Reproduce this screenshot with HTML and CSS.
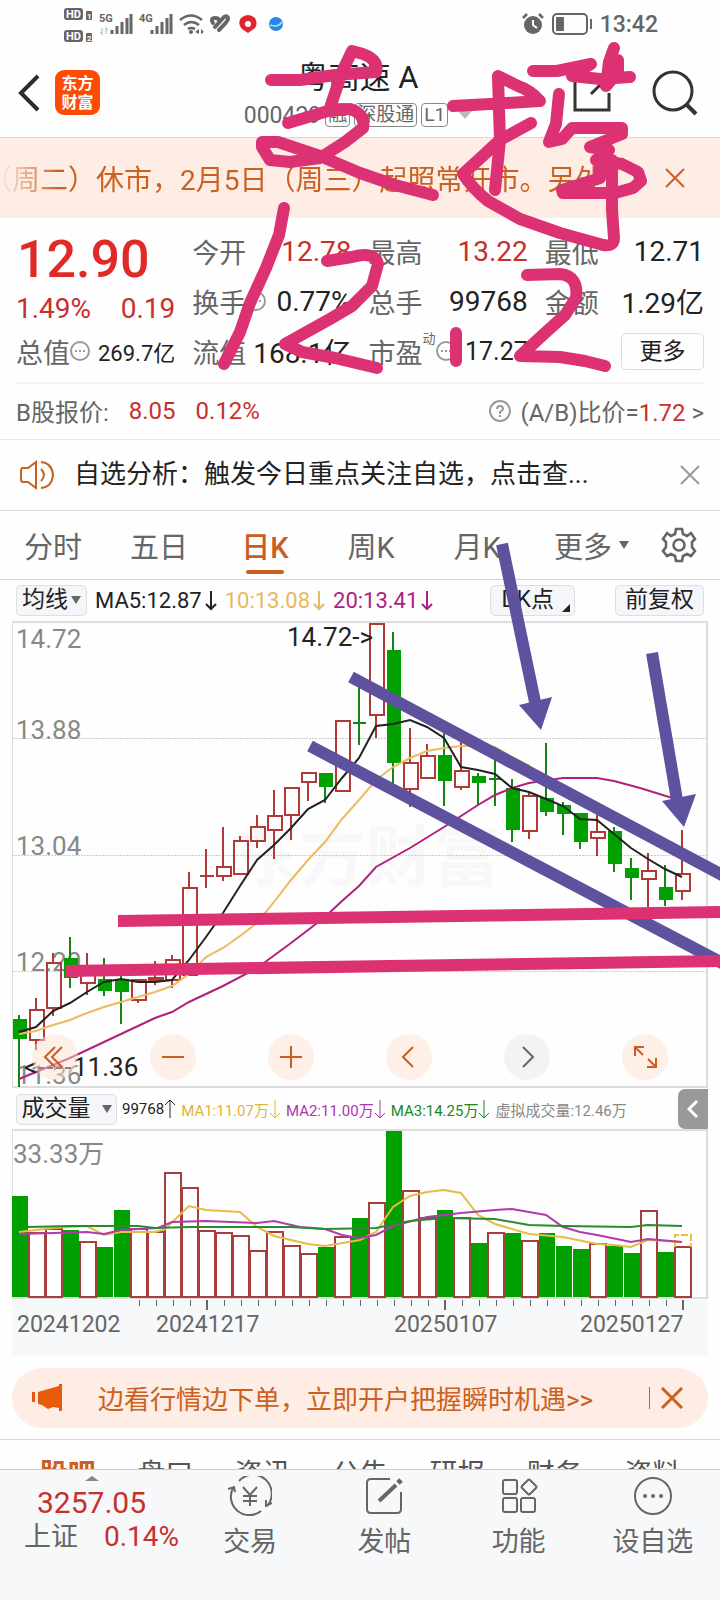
FILE: index.html
```html
<!DOCTYPE html>
<html lang="zh-CN">
<head>
<meta charset="utf-8">
<meta name="viewport" content="width=device-width, initial-scale=1">
<title>粤高速 A</title>
<link rel="stylesheet" href="styles.css">
</head>
<body>
<div class="status">
  <svg class="status-icons" viewBox="60 0 230 48" role="img" aria-label="信号状态">
    <g fill="#666"><rect x="64" y="8" width="19" height="12" rx="3"/><rect x="64" y="30" width="19" height="12" rx="3"/><rect x="86" y="11" width="6" height="9" rx="1"/><rect x="86" y="33" width="6" height="9" rx="1"/></g>
    <g class="tiny" fill="#fff"><text x="66" y="18">HD</text><text x="66" y="40">HD</text></g>
    <g class="micro" fill="#fff"><text x="87" y="19">1</text><text x="87" y="41">2</text></g>
    <g class="tiny" fill="#666"><text x="99" y="22">5G</text><text x="139" y="22">4G</text></g>
    <path d="M112 30v4M117 26v8M122 22v12M127 18v16M131 14v20M152 30v4M157 26v8M162 22v12M167 18v16M171 14v20" stroke="#666" stroke-width="3"/>
    <path d="M102 28v6l-2-2M106 34v-6l2 2" stroke="#ccc" stroke-width="1.5" fill="none"/>
    <g fill="none" stroke="#666" stroke-width="2.6"><path d="M180 20q11-9 22 0M184 25q7-6 15 0M188 29q3-2 7 0"/></g>
    <circle cx="191" cy="32" r="2" fill="#666"/><path d="M199 29l-4 3 4 2zM201 29v5l3-2z" fill="#666"/>
    <path d="M213 23q-3-5 2-5 4 0 4 3M215 27l9-10q4-2 4 2 0 2-9 11" fill="none" stroke="#666" stroke-width="4" stroke-linecap="round"/>
    <path d="M241 18q7-6 14 0 3 6 0 10l-7 5-6-4q-5-6-1-11z" fill="#dc2530"/><circle cx="248" cy="24" r="3" fill="#fff"/>
    <circle cx="276" cy="24" r="7" fill="#2789e5"/><path d="M270 25q8 3 12-3" stroke="#b5dcff" stroke-width="1.5" fill="none"/>
  </svg>
  <div class="status-right">
    <svg width="22" height="22" viewBox="0 0 22 22"><circle cx="11" cy="12" r="9" fill="#666"/><path d="M1 5l4-4M17 1l4 4" stroke="#666" stroke-width="2.5"/><path d="M11 7v5l4 3" stroke="#fff" stroke-width="2" fill="none"/></svg>
    <svg width="42" height="22" viewBox="0 0 42 22"><rect x="2" y="1" width="34" height="20" rx="4" fill="none" stroke="#666" stroke-width="2"/><rect x="5" y="4" width="8" height="14" rx="1" fill="#666"/><path d="M40 6v10" stroke="#666" stroke-width="2"/></svg>
    <time>13:42</time>
  </div>
</div>

<header class="header">
  <div class="header-left">
    <button class="icon-btn" aria-label="返回"><svg width="24" height="38" viewBox="0 0 24 38"><path d="M20 2L3 19l17 17" fill="none" stroke="#2c2c2c" stroke-width="4"/></svg></button>
    <div class="logo"><span>东方</span><span>财富</span></div>
  </div>
  <div class="header-title">
    <h1>粤高速 A</h1>
    <div class="sub"><span>000429</span><i>融</i><i>深股通</i><i>L1</i><b class="caret"></b></div>
  </div>
  <div class="header-right">
    <button class="icon-btn" aria-label="分享"><svg width="40" height="44" viewBox="0 0 40 44"><path d="M20 5H3v34h34V22M19 23L36 6M26 4h11v11" fill="none" stroke="#333" stroke-width="3"/></svg></button>
    <button class="icon-btn" aria-label="搜索"><svg width="46" height="46" viewBox="0 0 46 46"><circle cx="21" cy="21" r="19" fill="none" stroke="#333" stroke-width="3"/><path d="M34 34l10 10" stroke="#333" stroke-width="4"/></svg></button>
  </div>
</header>

<div class="ticker">
  <p>（周二）休市，2月5日（周三）起照常开市。另外</p>
  <button class="icon-btn" aria-label="关闭公告"><svg width="22" height="22" viewBox="0 0 22 22"><path d="M2 2l18 18M20 2L2 20" stroke="#cc6020" stroke-width="2"/></svg></button>
</div>

<section class="quote">
  <div class="quote-main">
    <div class="price up">12.90</div>
    <div class="change up"><span>1.49%</span><span>0.19</span></div>
    <div class="pair"><span class="k">总值<svg class="dots" viewBox="0 0 20 20"><circle cx="10" cy="10" r="9"/><path d="M5 10h2M9 10h2M13 10h2"/></svg></span><span class="small">269.7亿</span></div>
  </div>
  <div class="quote-col">
    <div class="pair"><span class="k">今开</span><span class="up">12.78</span></div>
    <div class="pair"><span class="k">换手<svg class="dots" viewBox="0 0 20 20"><circle cx="10" cy="10" r="9"/><path d="M5 10h2M9 10h2M13 10h2"/></svg></span><span>0.77%</span></div>
    <div class="pair"><span class="k">流值</span><span>168.1亿</span></div>
  </div>
  <div class="quote-col">
    <div class="pair"><span class="k">最高</span><span class="up">13.22</span></div>
    <div class="pair"><span class="k">总手</span><span>99768</span></div>
    <div class="pair"><span class="k">市盈<sup>动</sup><svg class="dots" viewBox="0 0 20 20"><circle cx="10" cy="10" r="9"/><path d="M5 10h2M9 10h2M13 10h2"/></svg></span><span class="mid">17.27</span></div>
  </div>
  <div class="quote-col">
    <div class="pair"><span class="k">最低</span><span>12.71</span></div>
    <div class="pair"><span class="k">金额</span><span>1.29亿</span></div>
    <div class="pair end"><button class="more">更多</button></div>
  </div>
</section>

<section class="bshare">
  <span>B股报价:</span><span class="up">8.05</span><span class="up">0.12%</span>
  <a href="#ratio" class="ratio"><svg width="22" height="22" viewBox="0 0 22 22"><circle cx="11" cy="11" r="10" fill="none" stroke="#999" stroke-width="2"/><path d="M8 9q0-3 3-3t3 3q0 1-3 3v2M11 15v2" fill="none" stroke="#999" stroke-width="2"/></svg><span>(A/B)比价=<em class="up">1.72</em> &gt;</span></a>
</section>

<section class="notice">
  <svg width="34" height="30" viewBox="0 0 34 30" fill="none" stroke="#c9601f" stroke-width="2"><path d="M16 2v26l-8-6H3q-2 0-2-3v-8q0-3 2-3h5zM21 9q6 6 0 12M21 2q11 1 12 13-1 12-12 13"/></svg>
  <p>自选分析：触发今日重点关注自选，点击查...</p>
  <button class="icon-btn" aria-label="关闭提示"><svg width="20" height="20" viewBox="0 0 20 20"><path d="M1 1l18 18M19 1L1 19" stroke="#999" stroke-width="2"/></svg></button>
</section>

<nav class="tabs">
  <button>分时</button><button>五日</button><button class="active">日K</button><button>周K</button><button>月K</button>
  <button class="tab-more">更多<b class="tri"></b></button>
  <button class="gear" aria-label="设置"><svg width="36" height="36" viewBox="0 0 36 36" fill="none" stroke="#666" stroke-width="2.6"><path d="M15 2h6l1 5 4 2 4-3 4 6-3 3v5l3 4-4 5-4-2-4 2-1 5h-6l-1-5-4-2-4 2-4-5 3-4v-5l-3-3 4-6 4 3 4-2z"/><circle cx="18" cy="18" r="5.5"/></svg></button>
</nav>

<div class="ma-bar">
  <button class="chip">均线<b class="tri"></b></button>
  <span class="c-black">MA5:12.87<svg class="arr" viewBox="0 0 12 22"><path d="M6 2v18M1 15l5 5 5-5"/></svg></span>
  <span class="c-yellow">10:13.08<svg class="arr" viewBox="0 0 12 22"><path d="M6 2v18M1 15l5 5 5-5"/></svg></span>
  <span class="c-mag">20:13.41<svg class="arr" viewBox="0 0 12 22"><path d="M6 2v18M1 15l5 5 5-5"/></svg></span>
  <div class="chips-right"><button class="chip dk">DK点<b class="corner"></b></button><button class="chip">前复权</button></div>
</div>

<div class="kchart">
  <svg class="chart" viewBox="0 620 720 469" role="img" aria-label="日K线图">
    <text class="watermark" x="232" y="881">东方财富</text>
    <path d="M12.5 622V1087" stroke="#ddd"/><path d="M12 622H707V1087H12" fill="none" stroke="#ddd" stroke-width="2"/>
    <path d="M12 738.500H707M12 855.500H707M12 971.500H707" stroke="#ccc" stroke-dasharray="2 1"/>
    <g class="axis"><text x="16" y="648">14.72</text><text x="16" y="739">13.88</text><text x="16" y="855">13.04</text><text x="16" y="971">12.20</text><text x="16" y="1084">11.36</text></g>
    <path stroke="#148414" stroke-width="2" d="M19 1015V1087M70 937V988M104 958V996M121 975V1024M325 773V803M359 687V745M353 723H366M393 632V790M444 733V806M478 773V805M495 760V806M489 779H501M512 779V842M546 743V816M563 802V835M580 813V849M614 827V872M631 858V900M665 865V906"/>
    <path fill="#00a000" d="M13 1019h14v20h-14zM64 958h14v20h-14zM98 979h14v12h-14zM115 979h14v13h-14zM319 773h14v14h-14zM387 650h14v113h-14zM438 755h14v26h-14zM472 776h14v7h-14zM506 788h14v42h-14zM540 798h14v14h-14zM557 805h14v9h-14zM574 813h14v29h-14zM608 831h14v33h-14zM625 868h14v10h-14zM659 887h14v13h-14z"/>
    <path stroke="#b03a38" stroke-width="2" d="M36 998V1010M36 1040V1050M53 953V963M53 1008V1016M87 953V975M87 983V995M138 1000V1003M155 961V985M149 979.500H163M172 955V960M172 980V988M189 872V888M206 849V888M200 876H214M223 827V867M223 876V881M240 836V841M257 815V827M257 841V848M274 790V816M274 830V859M291 815V840M308 782V801M376 715V738M410 728V763M410 789V807M427 744V756M461 742V771M461 787V790M529 792V796M529 831V839M597 815V832M597 838V856M648 853V871M648 879V907M682 830V873M682 891V900"/>
    <path fill="none" stroke="#b03a38" stroke-width="2" d="M30 1010h14v30h-14zM47 963h14v45h-14zM81 975h14v8h-14zM132 980h14v20h-14zM149 978h14v3h-14zM166 960h14v20h-14zM183 888h14v87h-14zM217 867h14v9h-14zM234 841h14v33h-14zM251 827h14v14h-14zM268 816h14v14h-14zM285 788h14v27h-14zM302 773h14v9h-14zM336 721h14v70h-14zM370 624h14v91h-14zM404 763h14v26h-14zM421 756h14v22h-14zM455 771h14v16h-14zM523 796h14v35h-14zM591 832h14v6h-14zM642 871h14v8h-14zM676 874h14v17h-14z"/>
    <g fill="none" stroke-width="2">
      <polyline stroke="#b0207f" points="19,1079 70,1058 121,1034 155,1018 172,1012 189,1002 223,986 257,968 291,943 325,917 342,901 359,886 376,867 410,848 444,827 478,805 495,795 512,788 529,783 563,778 597,778 614,781 640,788 682,801"/>
      <polyline stroke="#edba5e" points="19,1034 36,1031 53,1025 70,1020 87,1013 104,1007 121,1002 138,997 155,992 172,986 189,974 206,957 223,948 240,936 257,923 274,902 291,880 308,860 325,842 342,819 359,800 376,780 393,767 410,758 427,751 444,748 461,746 478,746 495,747 512,757 530,766"/>
      <polyline stroke="#222" points="19,1032 36,1027 53,1011 70,1003 87,992 104,982 121,979 138,982 155,982 172,980 189,960 206,937 223,913 240,886 257,860 274,845 291,828 308,809 325,800 342,778 359,758 376,726 393,724 410,720 427,727 444,738 461,767 478,770 495,774 512,788 529,792 546,799 563,806 580,819 597,820 614,834 631,848 648,859 665,869 682,877"/>
    </g>
    <g class="mark"><text x="287" y="646">14.72-&gt;</text><text x="24" y="1076">&lt;</text><text x="73" y="1076">11.36</text></g>
    <path d="M38 1068H72" stroke="#222" stroke-width="2" stroke-dasharray="6 3"/>
  </svg>
  <div class="controls">
    <button aria-label="最早"><svg viewBox="0 0 46 46"><path d="M23 13L13 23l10 10M30 13L20 23l10 10"/></svg></button>
    <button aria-label="缩小"><svg viewBox="0 0 46 46"><path d="M12 23h22"/></svg></button>
    <button aria-label="放大"><svg viewBox="0 0 46 46"><path d="M12 23h22M23 12v22"/></svg></button>
    <button aria-label="向前"><svg viewBox="0 0 46 46"><path d="M27 13L17 23l10 10"/></svg></button>
    <button aria-label="向后" class="off"><svg viewBox="0 0 46 46"><path d="M19 13l10 10-10 10"/></svg></button>
    <button aria-label="全屏"><svg viewBox="0 0 46 46"><path d="M13 22v-9h9M13 13l8 8M34 24v9h-9M34 33l-8-8"/></svg></button>
  </div>
</div>

<div class="vol-bar">
  <button class="chip wide">成交量<b class="tri"></b></button>
  <span class="c-black">99768<svg class="arr" viewBox="0 0 12 22"><path d="M6 20V2M1 7l5-5 5 5"/></svg></span>
  <span class="c-gold">MA1:11.07万<svg class="arr" viewBox="0 0 12 22"><path d="M6 2v18M1 15l5 5 5-5"/></svg></span>
  <span class="c-violet">MA2:11.00万<svg class="arr" viewBox="0 0 12 22"><path d="M6 2v18M1 15l5 5 5-5"/></svg></span>
  <span class="c-green">MA3:14.25万<svg class="arr" viewBox="0 0 12 22"><path d="M6 2v18M1 15l5 5 5-5"/></svg></span>
  <span class="c-gray">虚拟成交量:12.46万</span>
  <button class="collapse" aria-label="展开"><svg width="12" height="20" viewBox="0 0 12 20"><path d="M10 2L2 10l8 8" fill="none" stroke="#fff" stroke-width="3"/></svg></button>
</div>

<svg class="chart" viewBox="0 1129 720 227" role="img" aria-label="成交量图">
  <rect x="12" y="1300" width="696" height="56" fill="#f7f8fa"/>
  <path d="M12.500 1130V1298" stroke="#ddd"/><path d="M12 1130H707V1298H12" fill="none" stroke="#ddd" stroke-width="2"/>
  <text class="axis" x="13" y="1163">33.33万</text>
  <path fill="#00a000" d="M12 1196h16v101h-16zM63 1230h16v67h-16zM97 1247h16v50h-16zM114 1210h16v87h-16zM318 1247h16v50h-16zM352 1218h16v79h-16zM386 1131h16v166h-16zM437 1210h16v87h-16zM471 1243h16v54h-16zM505 1233h16v64h-16zM539 1233h16v64h-16zM556 1246h16v51h-16zM573 1249h16v48h-16zM607 1246h16v51h-16zM624 1253h16v44h-16zM658 1252h16v45h-16z"/>
  <path fill="#fff" stroke="#a83e3c" stroke-width="2" d="M29 1233h16v64h-16zM46 1229h16v68h-16zM80 1242h16v55h-16zM131 1229h16v68h-16zM148 1232h16v65h-16zM165 1173h16v124h-16zM182 1188h16v109h-16zM199 1231h16v66h-16zM216 1233h16v64h-16zM233 1236h16v61h-16zM250 1251h16v46h-16zM267 1232h16v65h-16zM284 1246h16v51h-16zM301 1254h16v43h-16zM335 1237h16v60h-16zM369 1203h16v94h-16zM403 1191h16v106h-16zM420 1218h16v79h-16zM454 1218h16v79h-16zM488 1233h16v64h-16zM522 1241h16v56h-16zM590 1244h16v53h-16zM641 1211h16v86h-16zM675 1247h16v50h-16z"/>
  <path d="M675 1247V1235H691V1247" fill="none" stroke="#e8c03c" stroke-width="2" stroke-dasharray="7 2"/>
  <g fill="none" stroke-width="2">
    <polyline stroke="#e5bc46" points="19,1232 53,1228 87,1226 104,1235 121,1232 155,1232 165,1229 189,1206 206,1210 240,1212 257,1227 274,1236 308,1244 325,1246 360,1240 376,1232 393,1207 410,1196 427,1192 444,1190 461,1193 478,1215 495,1224 529,1234 563,1237 597,1244 614,1245 631,1247 648,1240 682,1242"/>
    <polyline stroke="#b03bb0" points="19,1234 53,1233 87,1232 104,1234 121,1230 158,1228 172,1222 206,1221 257,1223 274,1221 300,1227 325,1229 342,1235 359,1238 376,1235 393,1226 427,1217 461,1213 495,1210 512,1209 546,1215 563,1227 580,1232 597,1235 631,1242 648,1239 682,1242"/>
    <polyline stroke="#2a8a2e" points="28,1227 70,1226 138,1226 155,1228 189,1227 240,1227 291,1227 325,1229 376,1228 410,1221 444,1218 495,1219 529,1225 563,1226 631,1227 648,1225 682,1226"/>
  </g>
  <path stroke="#666" d="M139.500 1300v6M156.500 1300v6M173.500 1300v6M190.500 1300v6M224.500 1300v6M241.500 1300v6M258.500 1300v6M275.500 1300v6M292.500 1300v6M309.500 1300v6M326.500 1300v6M343.500 1300v6M360.500 1300v6M377.500 1300v6M394.500 1300v6M411.500 1300v6M428.500 1300v6M462.500 1300v6M479.500 1300v6M496.500 1300v6M513.500 1300v6M530.500 1300v6M547.500 1300v6M564.500 1300v6M581.500 1300v6M598.500 1300v6M615.500 1300v6M632.500 1300v6M649.500 1300v6M666.500 1300v6"/>
  <path stroke="#666" stroke-width="2" d="M207 1300v10M445 1300v10M683 1300v10"/>
  <g class="dates"><text x="17" y="1332">20241202</text><text x="156" y="1332">20241217</text><text x="394" y="1332">20250107</text><text x="580" y="1332">20250127</text></g>
</svg>

<section class="promo">
  <svg width="32" height="28" viewBox="0 0 32 28" fill="#e65a0c"><path d="M0 8h3v10H0zM6 8L27 2V0h3v27h-3v-3l-6-1-5 2-6-4-4-1z"/></svg>
  <a href="#open">边看行情边下单，立即开户把握瞬时机遇&gt;&gt;</a>
  <button class="icon-btn" aria-label="关闭广告"><svg width="22" height="22" viewBox="0 0 22 22"><path d="M1 1l20 20M21 1L1 21" stroke="#cc6020" stroke-width="3"/></svg></button>
</section>

<nav class="strip"><a href="#s1" class="active">股吧</a><a href="#s2">盘口</a><a href="#s3">资讯</a><a href="#s4">公告</a><a href="#s5">研报</a><a href="#s6">财务</a><a href="#s7">资料</a></nav>

<footer class="bottom">
  <div class="index"><b class="up-caret"></b><span class="big">3257.05</span><div><span class="k">上证</span><span class="pct">0.14%</span></div></div>
  <button><svg viewBox="0 0 44 40"><path d="M11 5a18.500 18.500 0 0 1 28 25M33 35A18.500 18.500 0 0 1 5 12M0 13l6-2 1 5M44 27l-6 3 0-6"/><path d="M15 11l7 8 7-8M22 19v11M15 20h14M15 25h14"/></svg>交易</button>
  <button><svg viewBox="0 0 44 40"><path d="M28 3H9q-4 0-4 4v26q0 4 4 4h26q4 0 4-4V16"/><path d="M17 25L34 9" stroke-width="4"/><path d="M36 7l3-3" stroke-width="5"/></svg>发帖</button>
  <button><svg viewBox="0 0 44 40"><rect x="6" y="4" width="14" height="14" rx="2"/><rect x="6" y="22" width="14" height="14" rx="2"/><rect x="24" y="22" width="14" height="14" rx="2"/><path d="M31 4q1-1 2 0l6 6q1 1 0 2l-6 6q-1 1-2 0l-6-6q-1-1 0-2z"/></svg>功能</button>
  <button><svg viewBox="0 0 44 40"><circle cx="22" cy="20" r="18"/><path d="M14 20h0M22 20h0M30 20h0" stroke-width="4" stroke-linecap="round"/></svg>设自选</button>
</footer>

<svg class="drawing" viewBox="0 0 720 1600" aria-hidden="true">
  <g fill="none" stroke="#5e519e" stroke-width="12"><path d="M351 677L724 876M310 746L724 964M502 544L535 702M652 653L677 800"/></g>
  <path fill="#5e519e" d="M519 705L552 697 541 730zM662 801L696 794 684 827z"/>
  <path d="M118 921L720 912M66 971L720 961" stroke="#dc3273" stroke-width="12"/>
  <g fill="none" stroke="#dc3273" stroke-width="12" stroke-linecap="round" stroke-linejoin="round">
    <path d="M271 80L300 80 335 75 376 72Q379 60 363 54L352 51 342 72 330 108M288 123L328 111 350 109Q366 114 363 128L345 142 320 158 290 162 270 160 262 147 262 142 278 142 320 156 360 173 395 185 433 195"/>
    <path d="M453 106L490 104 540 101Q530 90 518 86L498 76 499 110 500 140 495 190M531 123L500 140 463 174Q472 188 488 201L520 219 560 233 603 245Q614 247 614 238L612 210 612 160"/>
    <path d="M533 71L557 71 591 64 572 76 600 79 630 77M614 48L609 62 606 86 618 72 618 60M559 94L556 124 549 142 562 139 572 128 622 128 622 134 590 147 609 150 596 160 622 164 638 172 641 181 633 188 615 193 563 193 562 190 591 181 600 178 600 164"/>
    <path d="M284 208L279 235 266 268 250 303 240 332 224 364M327 261L352 257Q375 251 378 264L372 286 352 306 330 319 285 344 302 352 335 358 377 368M456 333V361M527 275L560 274Q579 276 576 298L565 315 545 333 520 356 560 357 585 361 605 366"/>
  </g>
</svg>
</body>
</html>
```
FILE: styles.css
```css
* { box-sizing: border-box; }
body {
  margin: 0;
  position: relative;
  height: 100vh;
  display: flex;
  flex-direction: column;
  overflow: hidden;
  background: #fefefe;
  color: #222;
  font-family: Roboto, "Noto Sans CJK SC", sans-serif;
  font-size: 27px;
}
body > * { flex: none; }
p, h1 { margin: 0; font-weight: 400; }
button { border: 0; padding: 0; background: none; font: inherit; color: inherit; }
a { color: inherit; text-decoration: none; }
em, i { font-style: normal; }
svg { flex: none; }
.icon-btn { display: flex; }
.up { color: #c8302c; }

.status { display: flex; justify-content: space-between; height: 48px; padding: 0 62px 0 60px; }
.status-icons { width: 230px; height: 48px; }
.status-right { display: flex; align-items: center; gap: 7px; color: #666; font-size: 23px; font-weight: 500; }
.tiny { font-size: 11px; font-weight: 700; }
.micro { font-size: 8px; font-weight: 700; }

.header {
  display: grid;
  grid-template-columns: 1fr auto 1fr;
  height: 90px;
  padding: 0 22px 0 18px;
  border-bottom: 1px solid #d8d8d8;
}
.header-left, .header-right { display: flex; align-items: center; }
.header-left { gap: 13px; }
.header-right { justify-content: flex-end; gap: 40px; }
.logo {
  display: flex;
  flex-direction: column;
  align-items: center;
  justify-content: center;
  width: 45px;
  height: 45px;
  border-radius: 9px;
  background: #fb4b04;
  color: #fff;
  font-size: 16px;
  line-height: 19px;
  font-weight: 700;
}
.header-title { display: flex; flex-direction: column; align-items: center; padding-top: 12px; }
.header-title h1 { font-size: 31px; line-height: 36px; }
.sub { display: flex; align-items: center; gap: 4px; height: 38px; font-size: 23px; color: #666; }
.sub i { padding: 0 2px; border: 1px solid #888; border-radius: 4px; font-size: 19px; line-height: 22px; }
.caret { margin-left: 6px; border: 7px solid transparent; border-top: 8px solid #bbb; border-bottom: 0; }

.ticker {
  display: flex;
  align-items: center;
  justify-content: space-between;
  height: 80px;
  padding-right: 34px;
  background: #fdede4;
  color: #cc6020;
  font-size: 28px;
}
.ticker p {
  width: 612px;
  overflow: hidden;
  white-space: nowrap;
  text-indent: -16px;
  mask-image: linear-gradient(90deg, transparent, #000 60px);
}

.quote {
  display: grid;
  grid-template-columns: repeat(4, 1fr);
  gap: 17px;
  margin: 0 16px;
  padding: 8px 0 6px;
  border-bottom: 2px solid #f3f3f3;
  font-size: 28px;
}
.price { height: 64px; padding-left: 1px; font-size: 52px; line-height: 68px; font-weight: 500; color: #e02a28; }
.change { display: flex; justify-content: space-between; height: 36px; line-height: 38px; }
.pair { display: flex; justify-content: space-between; align-items: center; height: 50px; white-space: nowrap; }
.pair.end { justify-content: flex-end; }
.k { color: #666; font-size: 27px; }
.pair .k { display: flex; align-items: center; }
.small { font-size: 22px; }
.mid { font-size: 25px; }
.dots { width: 20px; height: 20px; fill: none; stroke: #999; stroke-width: 2; }
.k sup { align-self: flex-start; font-size: 13px; line-height: 14px; }
.more { width: 83px; height: 37px; border: 1px solid #ddd; border-radius: 5px; font-size: 23px; line-height: 33px; }

.bshare { display: flex; align-items: center; gap: 20px; height: 56px; padding: 0 16px 2px; border-bottom: 1px solid #e8e8e8; color: #666; font-size: 24px; }
.ratio { display: flex; align-items: center; gap: 9px; margin-left: auto; }

.notice { display: flex; align-items: center; height: 71px; padding: 0 20px; border-bottom: 1px solid #d8d8d8; font-size: 26px; }
.notice p { margin: 0 auto 0 20px; line-height: 36px; padding-bottom: 2px; }

.tabs { display: flex; align-items: stretch; height: 69px; border-bottom: 1px solid #d4d4d4; color: #666; font-size: 29px; }
.tabs button { position: relative; width: 106px; }
.tabs .active { color: #cc5c20; font-weight: 500; }
.tabs .active::after { content: ""; position: absolute; left: 34px; right: 34px; bottom: 5px; height: 4px; border-radius: 2px; background: #cc5c20; }
.tabs .tab-more { display: flex; align-items: center; gap: 7px; width: auto; padding-left: 24px; }
.tabs .gear { display: flex; align-items: center; width: auto; margin: 0 23px 0 auto; }
.tri { border: 5px solid transparent; border-top: 8px solid #666; border-bottom: 0; }

.ma-bar { display: flex; align-items: center; gap: 8px; height: 40px; padding: 0 16px; font-size: 22px; }
.ma-bar > span { display: flex; align-items: center; gap: 3px; white-space: nowrap; }
.chip { display: flex; align-items: center; justify-content: center; gap: 3px; height: 31px; padding: 0 5px; border: 1px solid #dcdfe2; border-radius: 5px; background: #f5f6f9; font-size: 23px; line-height: 28px; white-space: nowrap; color: #222; }
.chips-right { display: flex; gap: 40px; margin-left: auto; }
.chips-right .chip { padding: 0 9px; }
.chips-right .dk { align-items: center; gap: 8px; padding: 0 4px 0 10px; }
.corner { align-self: flex-end; margin-bottom: 3px; border-left: 8px solid transparent; border-bottom: 8px solid #222; }
.arr { width: 12px; height: 22px; fill: none; stroke: currentColor; stroke-width: 2; }
.c-black { color: #222; }
.c-yellow { color: #e5b95e; }
.c-mag { color: #ad1f82; }
.c-gold { color: #e2b534; }
.c-violet { color: #b034b0; }
.c-green { color: #158a1a; }
.c-gray { color: #888; }

.kchart { position: relative; }
.chart { display: block; width: 100%; height: auto; }
.axis { font-size: 26px; fill: #888; }
.mark { font-size: 26px; fill: #222; }
.dates { font-size: 23px; fill: #666; }
.watermark { font-size: 67px; font-weight: 700; fill: #f8f8f8; }
.controls { position: absolute; left: 32px; right: 52px; bottom: 9px; display: flex; justify-content: space-between; }
.controls button { width: 46px; height: 46px; border-radius: 50%; background: rgba(255, 225, 208, .5); }
.controls .off { background: #f3f3f3; }
.controls svg { display: block; fill: none; stroke: #cc5c20; stroke-width: 2; }
.controls .off svg { stroke: #666; }

.vol-bar { display: flex; align-items: center; gap: 5px; height: 40px; padding: 0 12px 0 16px; font-size: 15px; white-space: nowrap; }
.vol-bar > span { display: flex; align-items: center; }
.vol-bar .arr { stroke-width: 1; }
.vol-bar .wide { gap: 11px; width: 101px; }
.collapse { display: flex; align-items: center; justify-content: center; width: 30px; height: 40px; margin-left: auto; border-radius: 7px 0 0 7px; background: #999; }

.promo { display: flex; align-items: center; height: 60px; margin: 12px 12px 11px; padding: 0 25px 0 20px; border-radius: 30px; background: #fdede4; color: #cc6020; font-size: 26px; white-space: nowrap; }
.promo a { margin: 0 auto 0 34px; padding-bottom: 2px; }
.promo button { padding-left: 11px; border-left: 1px solid #cc6020; }

.strip { flex: 1 1 0; min-height: 0; overflow: hidden; display: grid; grid-template-columns: repeat(7, 1fr); padding: 0 19px; border-top: 1px solid #d4d4d4; color: #555; font-size: 28px; line-height: 70px; text-align: center; }
.strip .active { color: #cc6020; font-weight: 700; }

.bottom { display: grid; grid-template-columns: 183px repeat(4, 1fr); height: 131px; border-top: 1px solid #ccc; background: #f7f8fa; color: #666; }
.bottom button { display: flex; flex-direction: column; align-items: center; gap: 6px; padding-top: 6px; line-height: 40px; align-self: start; }
.bottom button svg { width: 44px; height: 40px; fill: none; stroke: #666; stroke-width: 2; }
.index { display: flex; flex-direction: column; align-items: center; color: #c8302c; padding-top: 6px; }
.up-caret { border: 7px solid transparent; border-top: 0; border-bottom: 5px solid #888; }
.index .big { font-size: 30px; line-height: 44px; }
.index div { display: flex; gap: 26px; padding-left: 20px; line-height: 24px; }
.pct { font-size: 28px; }

.drawing { position: absolute; left: 0; top: 0; width: 100%; height: auto; pointer-events: none; }
```
